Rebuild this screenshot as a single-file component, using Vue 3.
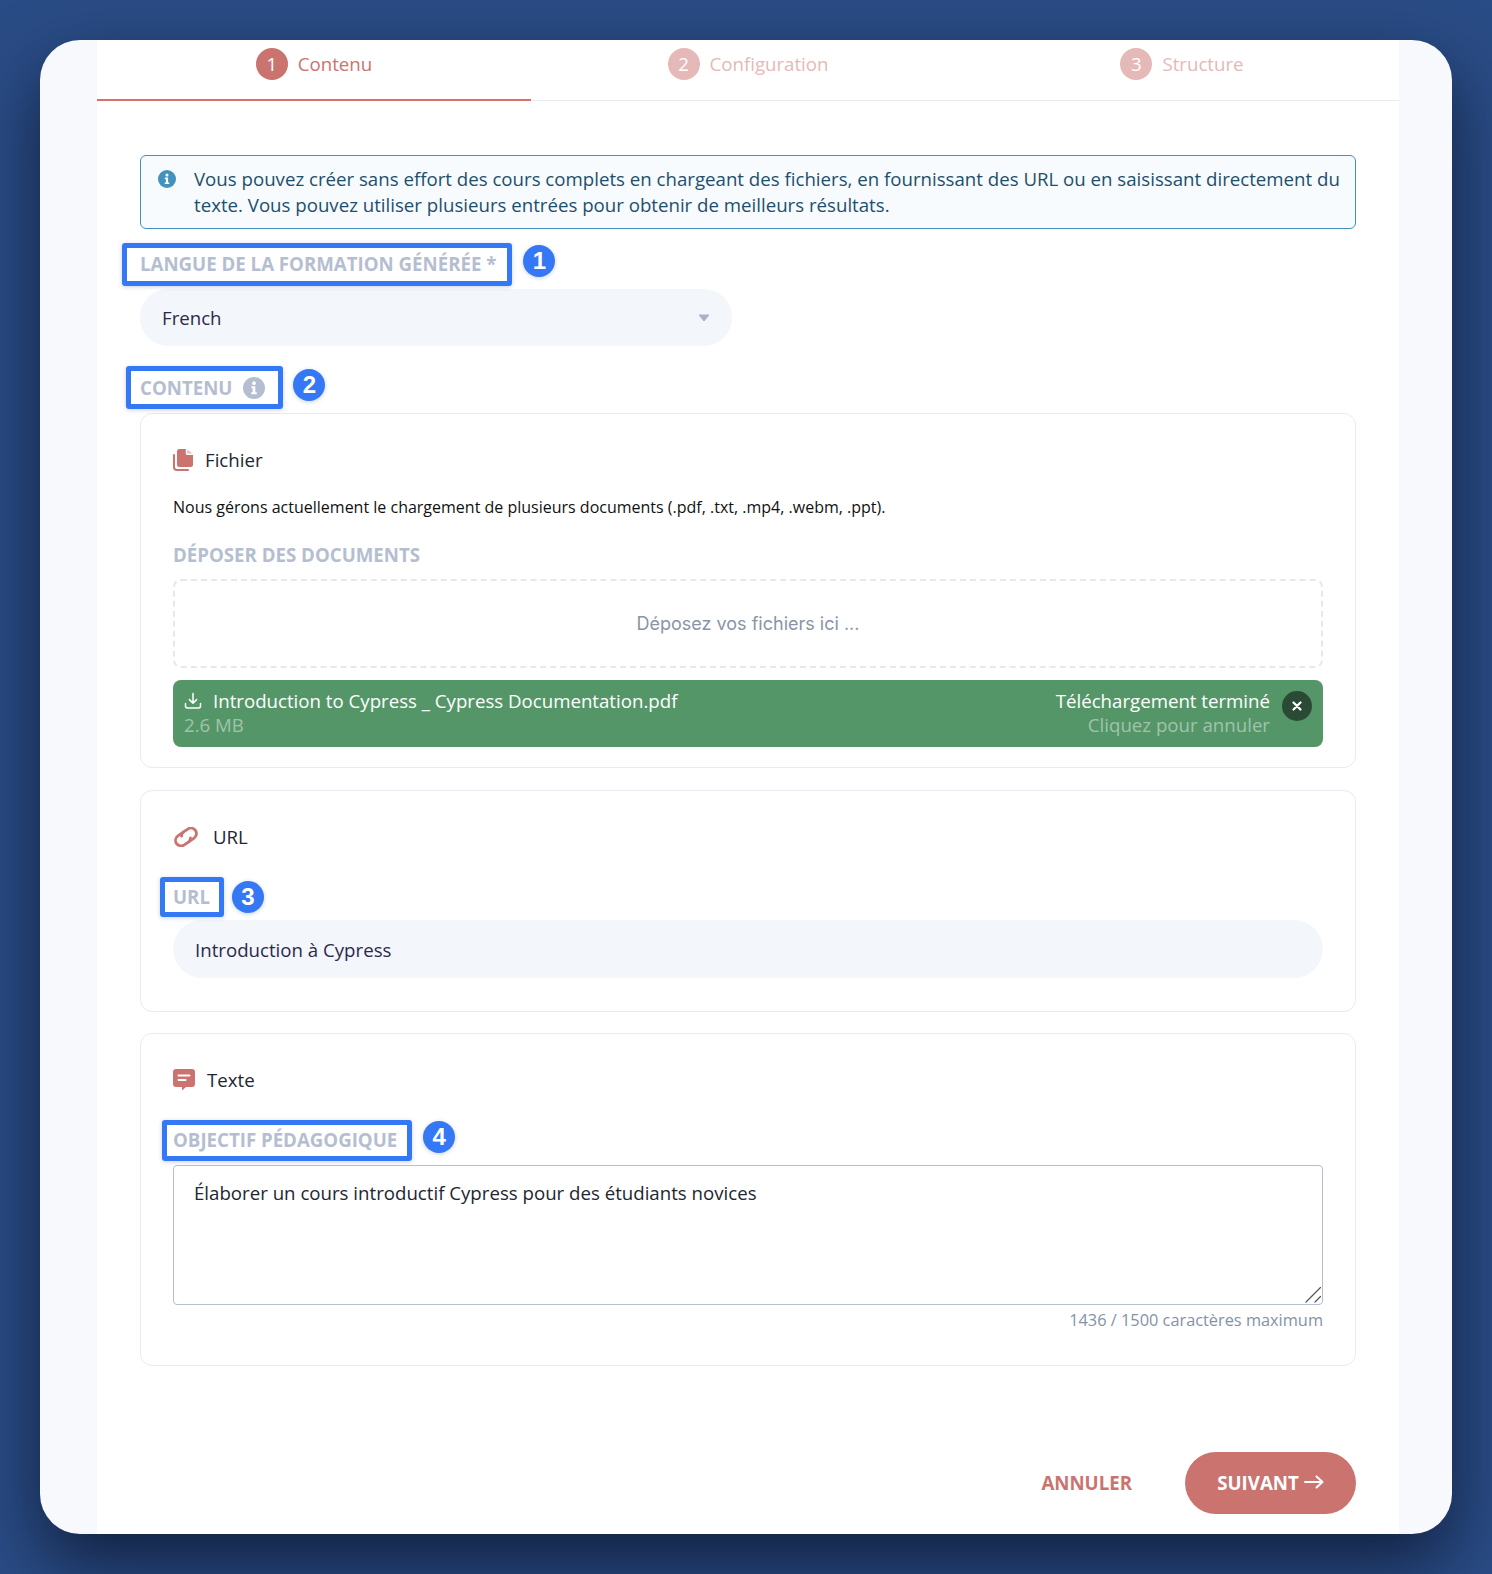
<template>
  <div class="page">
    <div class="window">
      <div class="sheet">
        <div class="steps">
          <div v-for="(step, i) in steps" :key="step" class="step" :class="{ active: i === 0 }">
            <span class="step-num">{{ i + 1 }}</span>
            <span>{{ step }}</span>
          </div>
        </div>

        <div class="content">
          <div class="alert">
            <svg class="alert-icon" viewBox="0 0 20 20">
              <circle cx="10" cy="10" r="10" fill="#4392bd" />
              <circle cx="10" cy="5.6" r="1.7" fill="#fff" />
              <path d="M7.6 8.4h3.6v5.4h1.3v1.8H7.5v-1.8h1.3v-3.6H7.6z" fill="#fff" />
            </svg>
            <p>
              Vous pouvez créer sans effort des cours complets en chargeant des fichiers, en fournissant des URL ou en
              saisissant directement du texte. Vous pouvez utiliser plusieurs entrées pour obtenir de meilleurs
              résultats.
            </p>
          </div>

          <div class="label first">
            <span class="mark mark-1">
              LANGUE DE LA FORMATION GÉNÉRÉE *
              <span class="box"></span>
              <span class="badge">1</span>
            </span>
          </div>
          <div class="select">
            <span>French</span>
            <svg class="caret" viewBox="0 0 12 8"><path d="M1 1h10L6 7z" fill="#a9b4c6" stroke="#a9b4c6" stroke-linejoin="round" /></svg>
          </div>

          <div class="label second">
            <span class="mark mark-2">
              CONTENU
              <svg class="label-info" viewBox="0 0 20 20">
                <circle cx="10" cy="10" r="10" fill="#b5bed0" />
                <circle cx="10" cy="5.6" r="1.7" fill="#fff" />
                <path d="M7.6 8.4h3.6v5.4h1.3v1.8H7.5v-1.8h1.3v-3.6H7.6z" fill="#fff" />
              </svg>
              <span class="box"></span>
              <span class="badge">2</span>
            </span>
          </div>

          <section class="card card-file">
            <div class="card-head">
              <svg class="icon-file" viewBox="0 0 20 22">
                <path d="M1 6v12a3 3 0 0 0 3 3h11" fill="none" stroke="#cb736f" stroke-width="2" stroke-linecap="round" />
                <path d="M6.500 0h6.300v4.200c0 1 .8 1.800 1.800 1.800H20v9.500a2.500 2.500 0 0 1-2.500 2.500h-11A2.500 2.500 0 0 1 4 15.500v-13A2.500 2.500 0 0 1 6.500 0z" fill="#cb736f" />
                <path d="M14.300.6 19.400 4.600h-5.100z" fill="#e5b9b7" />
              </svg>
              <span>Fichier</span>
            </div>
            <p class="hint">Nous gérons actuellement le chargement de plusieurs documents (.pdf, .txt, .mp4, .webm, .ppt).</p>
            <div class="label plain">DÉPOSER DES DOCUMENTS</div>
            <div class="drop">Déposez vos fichiers ici ...</div>
            <div class="upload">
              <div class="upload-left">
                <div class="upload-name">
                  <svg class="icon-down" viewBox="0 0 18 18" fill="none" stroke="#fff" stroke-width="1.500" stroke-linecap="round" stroke-linejoin="round">
                    <path d="M9 1.500v9.500M5.400 7.600 9 11.200l3.600-3.600M1.500 11.500v2.600a1.900 1.900 0 0 0 1.900 1.900h11.200a1.900 1.900 0 0 0 1.900-1.900v-2.600" />
                  </svg>
                  <span>Introduction to Cypress _ Cypress Documentation.pdf</span>
                </div>
                <div class="upload-sub">2.6 MB</div>
              </div>
              <div class="upload-right">
                <div>Téléchargement terminé</div>
                <div class="upload-sub">Cliquez pour annuler</div>
              </div>
              <span class="upload-close">
                <svg viewBox="0 0 10 10" fill="none" stroke="#fff" stroke-width="2.200" stroke-linecap="round"><path d="M1.500 1.500l7 7M8.500 1.500l-7 7" /></svg>
              </span>
            </div>
          </section>

          <section class="card card-url">
            <div class="card-head">
              <svg class="icon-link" viewBox="0 0 26 20" fill="none" stroke="#cb736f" stroke-width="2.800" stroke-linecap="round">
                <g transform="rotate(-35 13 10)">
                  <path d="M13.500 4.500H7a5.500 5.500 0 0 0 0 11h5.500a4.500 4.500 0 0 0 3.600-2.200" />
                  <path d="M12.500 15.500H19a5.500 5.500 0 0 0 0-11h-5.500a4.500 4.500 0 0 0-3.600 2.200" />
                </g>
              </svg>
              <span>URL</span>
            </div>
            <div class="label inner">
              <span class="mark mark-3">
                URL
                <span class="box"></span>
                <span class="badge">3</span>
              </span>
            </div>
            <input class="text-input" type="text" value="Introduction à Cypress" readonly />
          </section>

          <section class="card card-text">
            <div class="card-head">
              <svg class="icon-chat" viewBox="0 0 22 22">
                <path d="M3 0h16a3 3 0 0 1 3 3v12a3 3 0 0 1-3 3h-6l-4 3.600V18H3a3 3 0 0 1-3-3V3a3 3 0 0 1 3-3z" fill="#cb736f" />
                <path d="M5.500 6.500h11M5.500 11h7" stroke="#fff" stroke-width="2" stroke-linecap="round" />
              </svg>
              <span>Texte</span>
            </div>
            <div class="label inner">
              <span class="mark mark-4">
                OBJECTIF PÉDAGOGIQUE
                <span class="box"></span>
                <span class="badge">4</span>
              </span>
            </div>
            <div class="area-wrap">
              <textarea class="area" readonly>Élaborer un cours introductif Cypress pour des étudiants novices</textarea>
              <svg class="grip" viewBox="0 0 16 16" fill="none" stroke="#555" stroke-width="1.200" stroke-linecap="round">
                <path d="M1 15 15.500 .5M10 15l5.500-5.500" />
              </svg>
            </div>
            <div class="count">1436 / 1500 caractères maximum</div>
          </section>

          <div class="actions">
            <button class="cancel" type="button">ANNULER</button>
            <button class="next" type="button">
              SUIVANT
              <svg viewBox="0 0 20 14" fill="none" stroke="#fff" stroke-width="2" stroke-linecap="round" stroke-linejoin="round"><path d="M1 7h17.500M12.500 1.500l6 5.500-6 5.500" /></svg>
            </button>
          </div>
        </div>
      </div>
    </div>
  </div>
</template>

<script setup>
const steps = ["Contenu", "Configuration", "Structure"];
</script>

<style>
html,
body {
  margin: 0;
  background: #2a4c86;
}
</style>

<style scoped>
.page {
  box-sizing: border-box;
  height: 1574px;
  padding: 40px;
  overflow: hidden;
  background: #2a4c86;
  font-family: "Open Sans", "Liberation Sans", sans-serif;
}

.window {
  height: 1494px;
  padding: 0 53px 0 57px;
  border-radius: 40px;
  background: #f8f9fd;
  box-shadow: 0 30px 70px rgba(8, 16, 36, 0.72);
  overflow: hidden;
}

.sheet {
  height: 100%;
  background: #fff;
}

.steps {
  display: grid;
  grid-template-columns: repeat(3, 1fr);
  height: 61px;
  box-sizing: border-box;
  border-bottom: 1px solid #e9ebf2;
}

.step {
  display: flex;
  align-items: center;
  justify-content: center;
  gap: 10px;
  height: 61px;
  box-sizing: border-box;
  padding-bottom: 14px;
  color: #e5b9b7;
  font-size: 18.67px;
}

.step.active {
  color: #cb736f;
  border-bottom: 2px solid #d9706a;
  padding-bottom: 12px;
}

.step-num {
  display: flex;
  align-items: center;
  justify-content: center;
  width: 32px;
  height: 32px;
  border-radius: 50%;
  background: #e5b9b7;
  color: #fff;
}

.active .step-num {
  background: #cb736f;
}

.content {
  padding: 54px 43px 0;
}

.alert {
  display: flex;
  box-sizing: border-box;
  height: 74px;
  padding: 10px 14px 0 17px;
  border: 1px solid #4392bd;
  border-radius: 6px;
  background: #f7fbfd;
  color: #1d4f6e;
  font-size: 18.67px;
  line-height: 26px;
}

.alert p {
  margin: 0;
}

.alert-icon {
  flex: none;
  width: 18px;
  height: 18px;
  margin: 4px 18px 0 0;
}

.label {
  color: #b5bed0;
  font-size: 18.67px;
  font-weight: 700;
  line-height: 24px;
}

.label.first {
  margin: 23px 0 13px;
}

.label.second {
  margin: 30px 0 13px;
}

.label.plain {
  margin-bottom: 12px;
}

.label.inner {
  margin-bottom: 14px;
}

.mark {
  position: relative;
  display: inline-flex;
  align-items: center;
}

.box {
  position: absolute;
  top: -9px;
  bottom: -10px;
  border: 5px solid #3578f6;
  border-radius: 3px;
  box-shadow: 0 1px 4px rgba(40, 70, 130, 0.25);
}

.badge {
  position: absolute;
  top: -7px;
  width: 32px;
  height: 32px;
  border-radius: 50%;
  background: #3578f6;
  color: #fff;
  font-family: "Liberation Sans", sans-serif;
  font-size: 24px;
  font-weight: 700;
  line-height: 32px;
  text-align: center;
  box-shadow: 0 1px 4px rgba(40, 70, 130, 0.25);
}

.mark-1 .box {
  left: -18px;
  right: -16px;
}

.mark-1 .badge {
  right: -59px;
}

.mark-2 .box {
  top: -10px;
  bottom: -9px;
  left: -14px;
  right: -18px;
}

.mark-2 .badge {
  right: -60px;
}

.mark-3 .box {
  top: -8px;
  bottom: -8px;
  left: -13px;
  right: -14px;
}

.mark-3 .badge {
  right: -54px;
  top: -4px;
}

.mark-4 .box {
  top: -8px;
  bottom: -9px;
  left: -11px;
  right: -15px;
}

.mark-4 .badge {
  right: -58px;
}

.label-info {
  width: 22px;
  height: 22px;
  margin-left: 11px;
}

.select {
  display: flex;
  align-items: center;
  justify-content: space-between;
  box-sizing: border-box;
  width: 592px;
  height: 57px;
  padding: 0 22px;
  border-radius: 28px;
  background: #f3f6fb;
  color: #2b2a4c;
  font-size: 18.67px;
}

.caret {
  width: 12px;
  height: 8px;
}

.card {
  box-sizing: border-box;
  padding: 32px;
  border: 1px solid #e9ebf2;
  border-radius: 12px;
  background: #fff;
}

.card-file {
  height: 355px;
}

.card-url {
  height: 222px;
  margin-top: 22px;
}

.card-text {
  height: 333px;
  margin-top: 21px;
}

.card-head {
  display: flex;
  align-items: center;
  height: 28px;
  color: #222631;
  font-size: 18.67px;
}

.card-head span {
  margin-bottom: 2px;
}

.icon-file {
  width: 20px;
  height: 22px;
  margin-right: 12px;
}

.icon-link {
  width: 26px;
  height: 20px;
  margin-right: 14px;
}

.icon-chat {
  width: 22px;
  height: 22px;
  margin-right: 12px;
}

.hint {
  margin: 21px 0 24px;
  color: #111;
  font-size: 16px;
  line-height: 24px;
}

.drop {
  display: flex;
  align-items: center;
  justify-content: center;
  box-sizing: border-box;
  height: 89px;
  border: 2px dashed #e4e9f0;
  border-radius: 8px;
  color: #8a94a6;
  font-family: Inter, "Liberation Sans", sans-serif;
  font-size: 18px;
}

.upload {
  display: flex;
  align-items: center;
  box-sizing: border-box;
  height: 67px;
  margin-top: 12px;
  padding: 0 11px 1px;
  border-radius: 8px;
  background: #559669;
  color: #fff;
  font-size: 18.67px;
  line-height: 24px;
}

.upload-left {
  flex: 1;
}

.upload-name {
  display: flex;
  align-items: center;
}

.icon-down {
  width: 18px;
  height: 18px;
  margin-right: 11px;
}

.upload-sub {
  color: rgba(255, 255, 255, 0.45);
}

.upload-right {
  text-align: right;
}

.upload-close {
  display: flex;
  align-items: center;
  justify-content: center;
  align-self: flex-start;
  width: 30px;
  height: 30px;
  margin: 11px 0 0 12px;
  border-radius: 50%;
  background: #2b4a35;
}

.upload-close svg {
  width: 10px;
  height: 10px;
}

.card-url .label.inner {
  margin: 34px 0 11px;
}

.card-text .label.inner {
  margin: 34px 0 13px;
}

.text-input {
  display: block;
  box-sizing: border-box;
  width: 100%;
  height: 58px;
  padding: 0 22px;
  border: 0;
  border-radius: 29px;
  outline: 0;
  background: #f3f6fb;
  color: #2b2a4c;
  font-family: inherit;
  font-size: 18.67px;
}

.area-wrap {
  position: relative;
}

.area {
  display: block;
  box-sizing: border-box;
  width: 100%;
  height: 140px;
  padding: 14px 20px;
  border: 1px solid #b5bed0;
  border-radius: 4px;
  outline: 0;
  color: #222631;
  font-family: inherit;
  font-size: 18.67px;
  line-height: 26px;
  resize: none;
}

.grip {
  position: absolute;
  right: 2px;
  bottom: 2px;
  width: 16px;
  height: 16px;
}

.count {
  margin-top: 3px;
  color: #8492a6;
  font-size: 16.33px;
  line-height: 24px;
  text-align: right;
}

.actions {
  display: flex;
  align-items: center;
  justify-content: flex-end;
  margin-top: 86px;
}

.cancel {
  margin-right: 53px;
  padding: 0 0 2px;
  border: 0;
  background: none;
  color: #cb736f;
  font-family: inherit;
  font-size: 18.67px;
  font-weight: 700;
}

.next {
  display: flex;
  align-items: center;
  justify-content: center;
  gap: 5px;
  width: 171px;
  height: 62px;
  padding: 0 0 2px;
  border: 0;
  border-radius: 31px;
  background: #cb736f;
  color: #fff;
  font-family: inherit;
  font-size: 18.67px;
  font-weight: 700;
}

.next svg {
  width: 20px;
  height: 14px;
}
</style>
